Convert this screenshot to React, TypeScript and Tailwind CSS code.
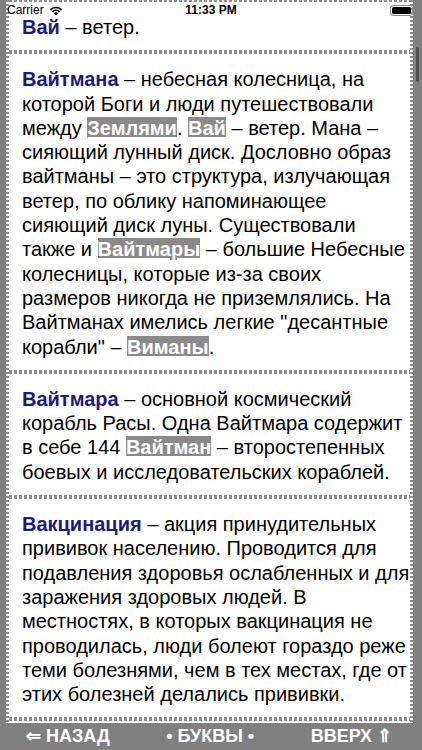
import React from "react";

const Sep = () => (
  <div className="h-[4px] bg-[image:repeating-linear-gradient(to_right,#8c8c8c_0_3px,transparent_3px_5px)]" />
);

const Term = ({ children }: { children: React.ReactNode }) => (
  <b className="font-bold text-[#1b1b7c]">{children}</b>
);

const Link = ({ children }: { children: React.ReactNode }) => (
  <span className="bg-[#8a8a8a] font-bold text-white underline decoration-[1.5px] underline-offset-[2px]">
    {children}
  </span>
);

// line breaks are kept as in the original page
const Entry = ({ children }: { children: React.ReactNode }) => (
  <p className="whitespace-nowrap pl-[13px] pr-[4px] pt-[13px] pb-[11px] text-[20px] leading-[24.3px] text-black">
    {children}
  </p>
);

const Edge = () => (
  <div className="w-[3px] shrink-0 bg-[image:repeating-linear-gradient(to_bottom,#8c8c8c_0_2px,transparent_2px_4px)]" />
);

function StatusBar() {
  return (
    <div className="absolute left-0 right-0 top-0 flex h-[20px] items-center justify-between px-[7px] text-[12px] font-semibold text-black">
      <div className="flex w-[100px] items-center gap-[5px]">
        <span className="font-normal">Carrier</span>
        <svg width="14" height="11" viewBox="0 0 14 11">
          <path d="M7 10.5 L9.2 8.2 A3.2 3.2 0 0 0 4.8 8.2 Z" fill="#000" />
          <path d="M2.9 6.3 A5.8 5.8 0 0 1 11.1 6.3 L9.9 7.5 A4.1 4.1 0 0 0 4.1 7.5 Z" fill="#000" />
          <path d="M0.8 4.2 A8.8 8.8 0 0 1 13.2 4.2 L12 5.4 A7.1 7.1 0 0 0 2 5.4 Z" fill="#000" />
        </svg>
      </div>
      <span>11:33 PM</span>
      <div className="flex w-[100px] items-center justify-end">
        <div className="flex h-[11px] w-[23px] items-center rounded-[3px] border border-[#8a8a8a] p-[1px]">
          <div className="h-full w-full rounded-[1.5px] bg-black" />
        </div>
        <div className="ml-[1px] h-[4px] w-[1.5px] rounded-r-sm bg-[#8a8a8a]" />
      </div>
    </div>
  );
}

export default function App() {
  return (
    <div className="relative flex h-[750px] w-[422px] flex-col overflow-hidden bg-[#808080] font-['Liberation_Sans',Arial,sans-serif]">
      <div className="relative flex h-[723px] shrink-0 overflow-hidden">
        <div className="ml-[6px] flex w-[407px] bg-white">
          <Edge />
          <div className="-mt-[2px] min-w-0 flex-1">
            <Sep />
            <Entry>
              <Term>Вай</Term> – ветер.
            </Entry>
            <Sep />
            <Entry>
              <Term>Вайтмана</Term> – небесная колесница, на
              <br />
              которой Боги и люди путешествовали
              <br />
              между <Link>Землями</Link>. <Link>Вай</Link> – ветер. Мана –
              <br />
              сияющий лунный диск. Дословно образ
              <br />
              вайтманы – это структура, излучающая
              <br />
              ветер, по облику напоминающее
              <br />
              сияющий диск луны. Существовали
              <br />
              также и <Link>Вайтмары</Link> – большие Небесные
              <br />
              колесницы, которые из-за своих
              <br />
              размеров никогда не приземлялись. На
              <br />
              Вайтманах имелись легкие "десантные
              <br />
              корабли" – <Link>Виманы</Link>.
            </Entry>
            <Sep />
            <Entry>
              <Term>Вайтмара</Term> – основной космический
              <br />
              корабль Расы. Одна Вайтмара содержит
              <br />
              в себе 144 <Link>Вайтман</Link> – второстепенных
              <br />
              боевых и исследовательских кораблей.
            </Entry>
            <Sep />
            <Entry>
              <Term>Вакцинация</Term> – акция принудительных
              <br />
              прививок населению. Проводится для
              <br />
              подавления здоровья ослабленных и для
              <br />
              заражения здоровых людей. В
              <br />
              местностях, в которых вакцинация не
              <br />
              проводилась, люди болеют гораздо реже
              <br />
              теми болезнями, чем в тех местах, где от
              <br />
              этих болезней делались прививки.
            </Entry>
            <Sep />
          </div>
          <Edge />
        </div>
        <div className="absolute left-[416px] top-[47px] h-[35px] w-[3px] rounded-full bg-[#505050]" />
      </div>
      <div className="flex h-[27px] items-center justify-between pl-[26px] pr-[30px] text-[18px] font-bold text-white">
        <span>⇐ НАЗАД</span>
        <span>• БУКВЫ •</span>
        <span>ВВЕРХ ⇑</span>
      </div>
      <StatusBar />
    </div>
  );
}
